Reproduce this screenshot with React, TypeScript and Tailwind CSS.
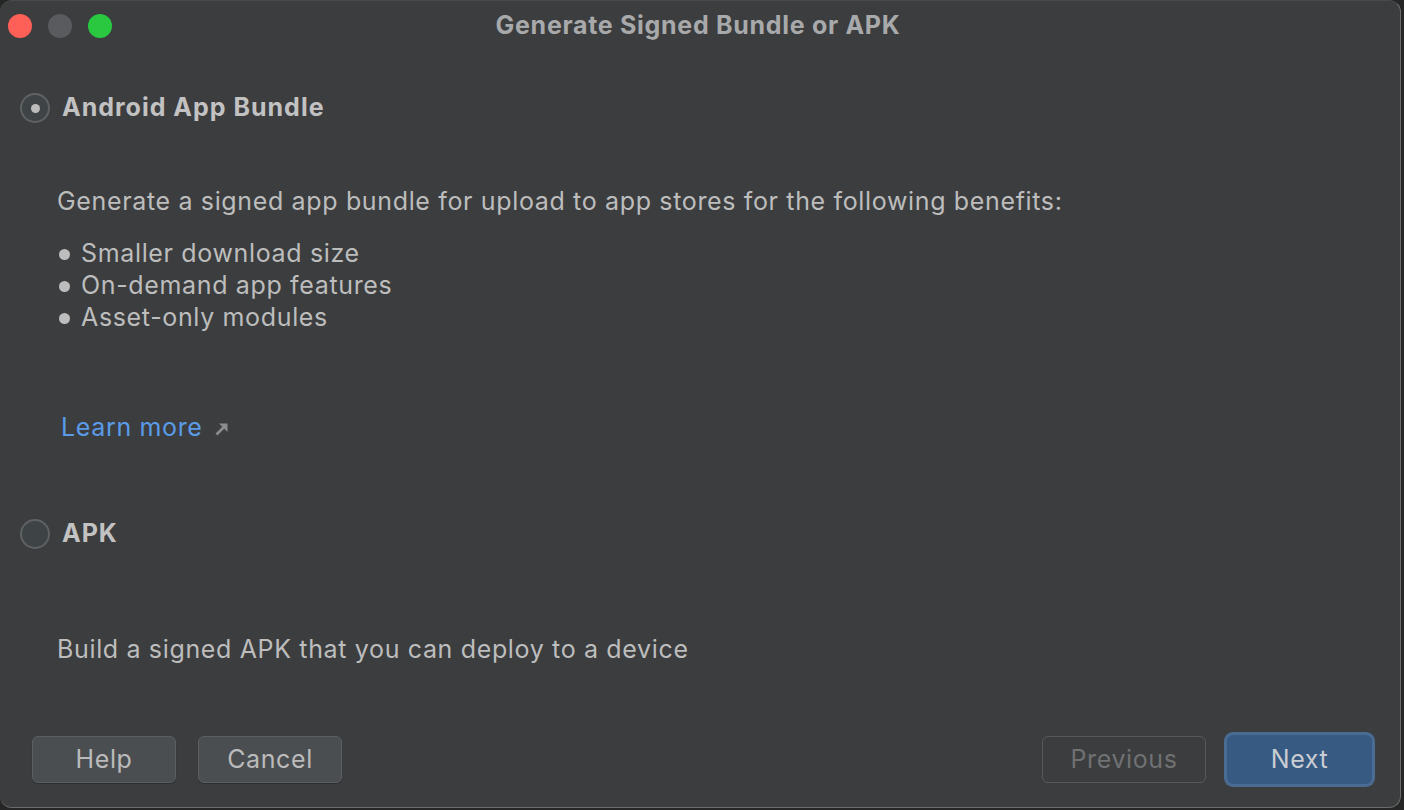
import React from "react";

const font = { fontFamily: "Inter, 'Noto Sans', 'Liberation Sans', sans-serif" };

function Radio({ checked }: { checked?: boolean }) {
  return (
    <div className="w-[30px] h-[30px] rounded-full border-2 border-[#5f6264] bg-[#3e4345] flex items-center justify-center shrink-0">
      {checked && <div className="w-[9px] h-[9px] rounded-full bg-[#bcbcbc]" />}
    </div>
  );
}

function Bullet({ children }: { children: React.ReactNode }) {
  return (
    <div className="flex items-center h-[32px]">
      <div className="w-[11px] h-[11px] rounded-full bg-[#bdbdbd] ml-[2px] mr-[11px]" />
      <span>{children}</span>
    </div>
  );
}

export default function App() {
  return (
    <div className="w-[1404px] h-[810px] bg-[#262626] overflow-hidden" style={font}>
      <div className="w-[1401px] h-[808px] bg-[#3c3d3f] rounded-[12px] border border-[#6b6b6b] border-l-0 border-t-[#4a4a4a] flex flex-col text-[#bdbdbd]">
        {/* Title bar */}
        <div className="relative h-[50px] flex items-center justify-center shrink-0">
          <div className="absolute left-[8px] top-[13px] flex gap-[16px]">
            <div className="w-[24px] h-[24px] rounded-full bg-[#fe5f57]" />
            <div className="w-[24px] h-[24px] rounded-full bg-[#5a5b5e]" />
            <div className="w-[24px] h-[24px] rounded-full bg-[#29c840]" />
          </div>
          <span className="text-[25px] font-bold text-[#a8a9ab] tracking-[0.7px] mr-[4px]">Generate Signed Bundle or APK</span>
        </div>

        {/* Content */}
        <div className="flex-1 flex flex-col pl-[20px]">
          <div className="flex items-center gap-[12px] h-[40px] mt-[37px]">
            <Radio checked />
            <span className="text-[25px] font-bold text-[#c2c2c2] tracking-[1px]">Android App Bundle</span>
          </div>

          <div className="pl-[37px] text-[25px] tracking-[0.65px] mt-[58px]">
            <div className="h-[32px] flex items-center">Generate a signed app bundle for upload to app stores for the following benefits:</div>
            <div className="mt-[20px]">
              <Bullet>Smaller download size</Bullet>
              <Bullet>On-demand app features</Bullet>
              <Bullet>Asset-only modules</Bullet>
            </div>
            <div className="flex items-center h-[32px] mt-[78px] pl-[4px]">
              <span className="text-[#5a9be8]">Learn more</span>
              <svg width="14" height="14" viewBox="0 0 14 14" className="ml-[12px] mt-[2px]">
                <path d="M1.5 12.5 L10 4" stroke="#8a8c8f" strokeWidth="2.6" fill="none" />
                <path d="M4 1.5 H12.5 V10 Z" fill="#8a8c8f" />
              </svg>
            </div>
          </div>

          <div className="flex items-center gap-[12px] h-[40px] mt-[70px]">
            <Radio />
            <span className="text-[25px] font-bold text-[#c2c2c2] tracking-[1px]">APK</span>
          </div>

          <div className="pl-[37px] text-[25px] tracking-[0.65px] mt-[80px] h-[32px] flex items-center">
            Build a signed APK that you can deploy to a device
          </div>
        </div>

        {/* Footer */}
        <div className="h-[91px] flex items-start pt-[20px] pl-[32px] pr-[25px] shrink-0">
          <div className="flex gap-[22px]">
            <button className="w-[144px] h-[47px] rounded-[6px] bg-[#4b4e51] border border-[#5c5f62] text-[25px] tracking-[0.6px] text-[#bbbbbb] shadow-[0_1px_1px_rgba(0,0,0,0.25)]">Help</button>
            <button className="w-[144px] h-[47px] rounded-[6px] bg-[#4b4e51] border border-[#5c5f62] text-[25px] tracking-[0.6px] text-[#bbbbbb] shadow-[0_1px_1px_rgba(0,0,0,0.25)]">Cancel</button>
          </div>
          <div className="ml-auto flex gap-[18px]">
            <button className="w-[164px] h-[47px] rounded-[6px] border border-[#57595c] text-[25px] tracking-[0.6px] text-[#6f7173]">Previous</button>
            <div className="rounded-[9px] p-[3px] bg-[#4a6c93] -mt-[4px]">
              <button className="w-[145px] h-[49px] rounded-[6px] bg-[#375a83] text-[25px] tracking-[0.6px] text-[#c9cdd2]">Next</button>
            </div>
          </div>
        </div>
      </div>
    </div>
  );
}
